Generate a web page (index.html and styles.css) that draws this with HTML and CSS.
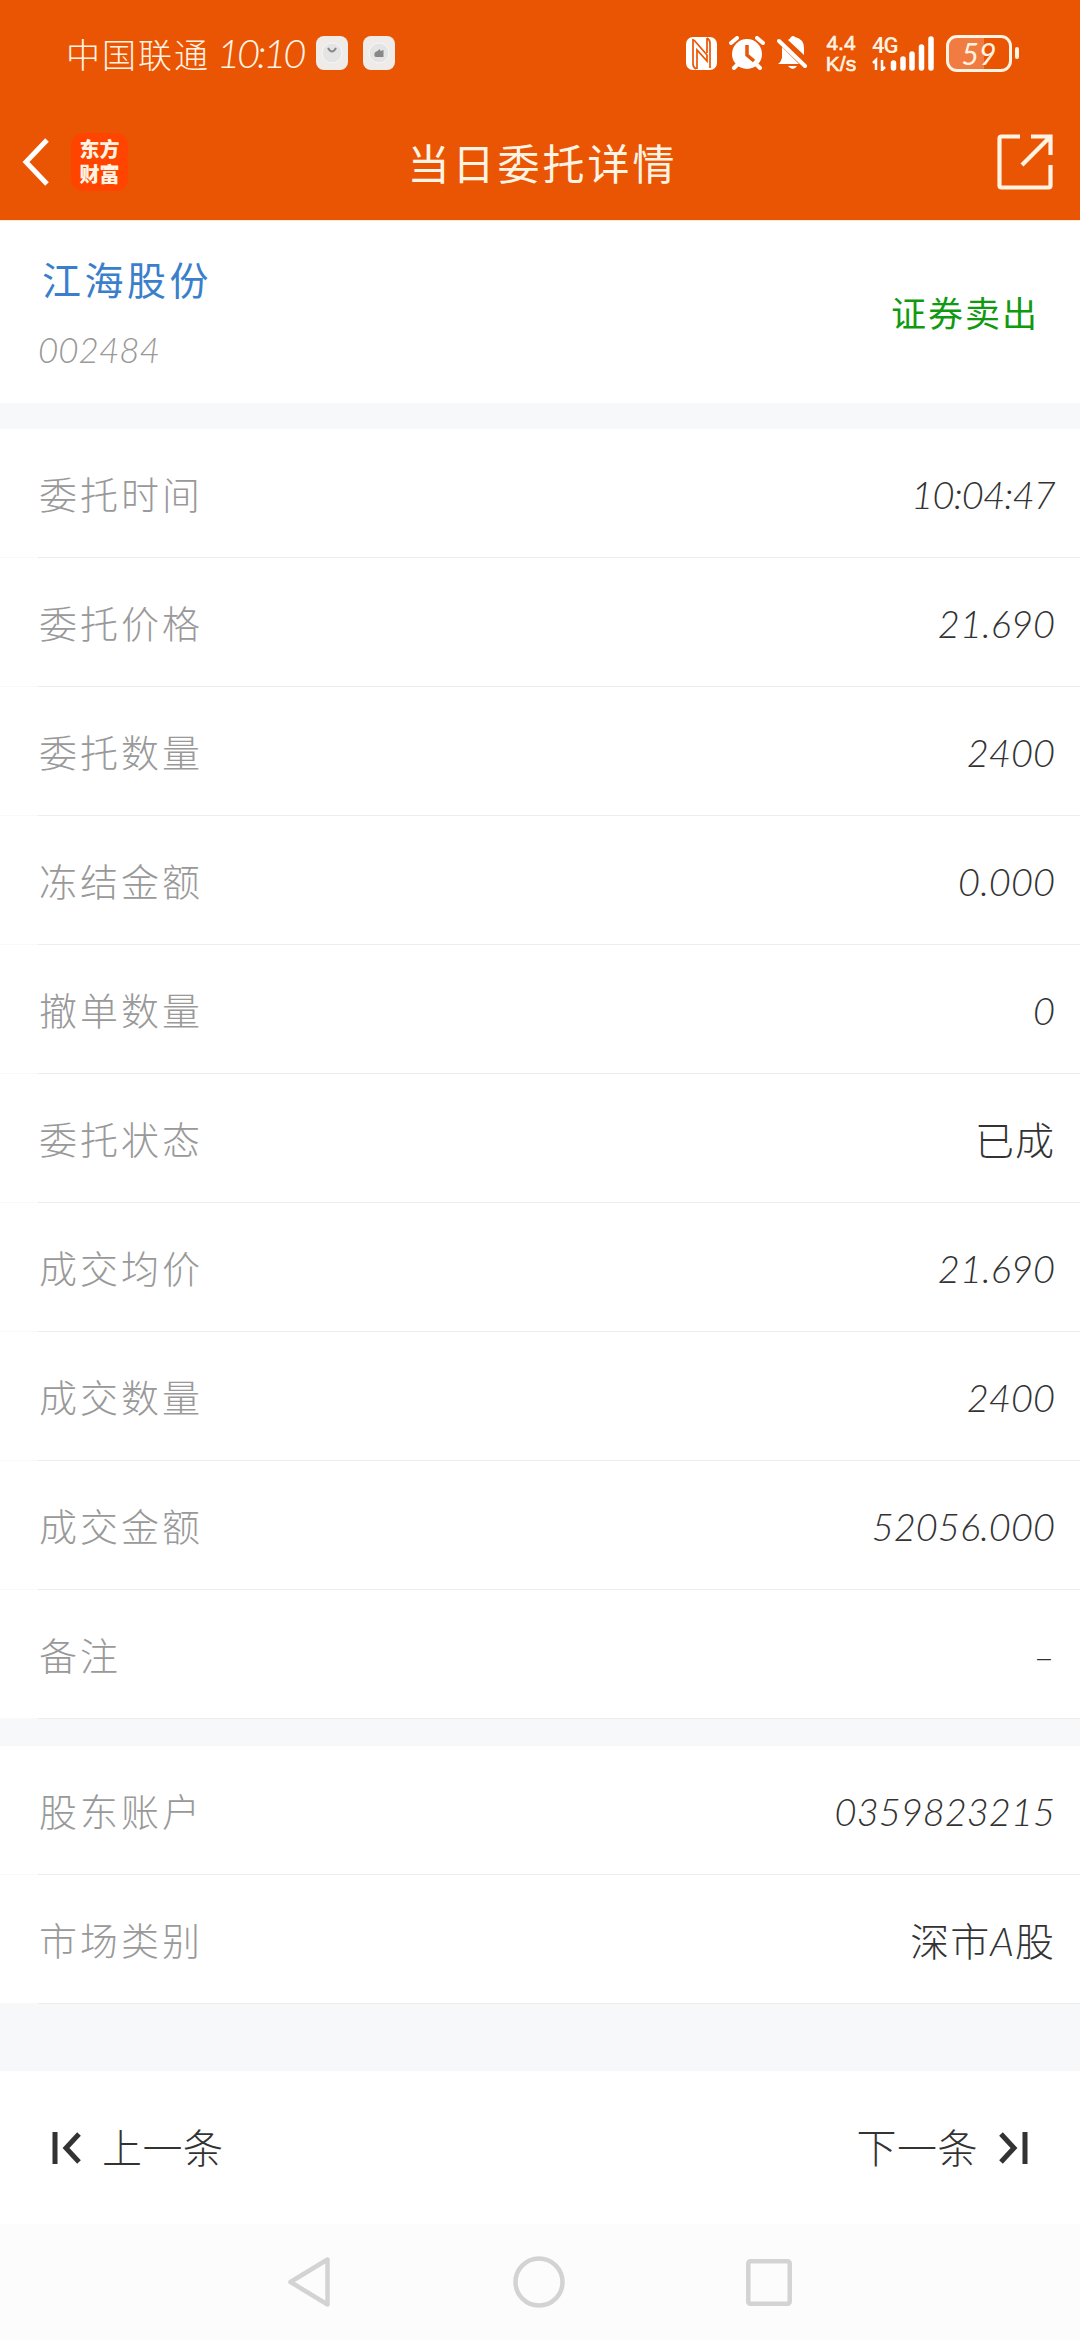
FILE: index.html
```html
<!DOCTYPE html>
<html lang="zh-CN">
<head>
    <meta charset="UTF-8">
    <meta name="viewport" content="width=device-width, initial-scale=1.0">
    <title>当日委托详情</title>
    <link rel="stylesheet" href="styles.css">
</head>
<body>
    <!-- 顶部 -->
    <header class="header">
        <div class="status-bar">
            <span class="carrier">中国联通</span>
            <span class="clock">10:10</span>
            <svg class="notice" width="32" height="34" viewBox="0 0 32 34">
                <rect width="32" height="34" rx="8" fill="#efebe9"/>
                <circle cx="16" cy="17" r="10" fill="#e4e4e4" stroke="#f6f6f6"/>
                <path d="M12 12q4 7 8 0" fill="none" stroke="#888" stroke-width="2"/>
            </svg>
            <svg class="notice" width="32" height="34" viewBox="0 0 32 34">
                <rect width="32" height="34" rx="8" fill="#efebe9"/>
                <circle cx="16" cy="17" r="10" fill="#e4e4e4" stroke="#f6f6f6"/>
                <path d="M11.500 20q-1-4 3-5l2-2 1 2 3-1v7h-8z" fill="#888"/>
            </svg>
            <div class="status-icons">
                <svg width="31" height="33" viewBox="0 0 31 33">
                    <rect width="31" height="33" rx="7" fill="#fff"/>
                    <path d="M7 2v25q0 3 3 5M24 31V6q0-3-3-5M11 32V13l10 11v-6L8 3M21 1v15" fill="none" stroke="#ea5504" stroke-width="1.700"/>
                </svg>
                <svg width="36" height="34" viewBox="0 0 36 34">
                    <circle cx="18" cy="18" r="15" fill="#fff"/>
                    <path d="M2 7l6-5M34 7l-6-5M9 28l-4 4M27 28l4 4" stroke="#fff" stroke-width="4" stroke-linecap="round"/>
                    <path d="M18 9v10l7 6" fill="none" stroke="#ea5504" stroke-width="3.500"/>
                </svg>
                <svg width="31" height="34" viewBox="0 0 31 34">
                    <path d="M5 22V11L22 28H1q3-2 4-6zM11 4q2-1 3-3q2-2 4 0q9 2 9 11v7zM11 30h9q-4 6-9 0z" fill="#fff"/>
                    <path d="M2 5l26 25" stroke="#fff" stroke-width="4" stroke-linecap="round"/>
                </svg>
                <div class="speed"><span>4.4</span><span>K/s</span></div>
                <div class="signal">
                    <span class="net">4G</span>
                    <svg width="62" height="35" viewBox="0 0 62 35">
                        <path d="M4 34V24L1 27M10 24v10l3-3" fill="none" stroke="#fff" stroke-width="2.500"/>
                        <path d="M21.500 27v5M31 23v9M40 18v14M49.500 11v21M59 3v29" stroke="#fff" stroke-width="5.500" stroke-linecap="round"/>
                    </svg>
                </div>
                <div class="battery"><span class="battery-box">59</span><i class="battery-cap"></i></div>
            </div>
        </div>
        <div class="title-bar">
            <svg class="back" width="28" height="48" viewBox="0 0 28 48">
                <path d="M25 2L4 24l21 22" fill="none" stroke="#fff" stroke-width="5"/>
            </svg>
            <div class="logo">东方<br>财富</div>
            <h1 class="title">当日委托详情</h1>
            <svg class="share" width="56" height="56" viewBox="0 0 56 56">
                <path d="M23 2.500H4.500q-2 0-2 2v47q0 2 2 2h47q2 0 2-2V31M34 2.500h19.500V21M52 4L25 31" fill="none" stroke="#fff4e4" stroke-width="4.200"/>
            </svg>
        </div>
    </header>

    <!-- 股票信息 -->
    <section class="stock">
        <div>
            <div class="stock-name">江海股份</div>
            <div class="stock-code">002484</div>
        </div>
        <div class="direction">证券卖出</div>
    </section>

    <!-- 委托明细 -->
    <section class="list">
        <div class="row"><span class="label">委托时间</span><span class="num time">10:04:47</span></div>
        <div class="row"><span class="label">委托价格</span><span class="num">21.690</span></div>
        <div class="row"><span class="label">委托数量</span><span class="num">2400</span></div>
        <div class="row"><span class="label">冻结金额</span><span class="num">0.000</span></div>
        <div class="row"><span class="label">撤单数量</span><span class="num">0</span></div>
        <div class="row"><span class="label">委托状态</span><span class="text">已成</span></div>
        <div class="row"><span class="label">成交均价</span><span class="num">21.690</span></div>
        <div class="row"><span class="label">成交数量</span><span class="num">2400</span></div>
        <div class="row"><span class="label">成交金额</span><span class="num">52056.000</span></div>
        <div class="row"><span class="label">备注</span><span class="num">–</span></div>
    </section>

    <!-- 账户信息 -->
    <section class="list">
        <div class="row"><span class="label">股东账户</span><span class="num">0359823215</span></div>
        <div class="row"><span class="label">市场类别</span><span class="text">深市<em>A</em>股</span></div>
    </section>

    <!-- 翻页 -->
    <footer class="pager">
        <div class="pager-item">
            <svg width="29" height="32" viewBox="0 0 29 32">
                <path d="M3 0v32M27 2L14 16l13 14" fill="none" stroke="#333" stroke-width="5"/>
            </svg>
            <span>上一条</span>
        </div>
        <div class="pager-item">
            <span>下一条</span>
            <svg width="29" height="32" viewBox="0 0 29 32">
                <path d="M26 0v32M2 2l13 14L2 30" fill="none" stroke="#333" stroke-width="5"/>
            </svg>
        </div>
    </footer>

    <!-- 系统导航栏 -->
    <nav class="nav-bar">
        <svg width="44" height="52" viewBox="0 0 44 52">
            <path d="M40.500 3.500v45L3.500 26z" fill="none" stroke="#d3d3d3" stroke-width="4.500" stroke-linejoin="round"/>
        </svg>
        <svg width="52" height="52" viewBox="0 0 52 52">
            <circle cx="26" cy="26" r="23.500" fill="none" stroke="#d3d3d3" stroke-width="4.500"/>
        </svg>
        <svg width="46" height="47" viewBox="0 0 46 47">
            <rect x="2.300" y="2.300" width="41.400" height="42.400" rx="2" fill="none" stroke="#d3d3d3" stroke-width="4.500"/>
        </svg>
    </nav>
</body>
</html>
```

FILE: styles.css
```css
* {
    box-sizing: border-box;
}

body {
    margin: 0;
    width: 1080px;
    height: 2340px;
    display: flex;
    flex-direction: column;
    overflow: hidden;
    background: #f7f8fa;
    color: #333;
    font-family: Lato, "Noto Sans CJK SC", sans-serif;
    font-weight: 300;
}

svg {
    display: block;
    flex: none;
}

/* 顶部 */
.header {
    height: 221px;
    background: #ea5504;
    border-bottom: 1px solid #ffecd0;
    color: #fff4e4;
}

.status-bar {
    display: flex;
    align-items: center;
    height: 106px;
    padding: 0 61px 0 66px;
}

.carrier {
    width: 151px;
    font-size: 34px;
    letter-spacing: 2px;
    white-space: nowrap;
}

.clock {
    width: 99px;
    font-size: 40px;
    font-style: italic;
    letter-spacing: -3.2px;
}

.notice {
    margin-right: 15px;
}

.status-icons {
    display: flex;
    align-items: center;
    margin-left: auto;
}

.status-icons > svg {
    margin-right: 12px;
}

.speed {
    display: flex;
    flex-direction: column;
    align-items: center;
    width: 34px;
    margin: 0 14px 0 4px;
    font: 500 21px/22px "Liberation Sans", sans-serif;
    -webkit-text-stroke: 0.6px #fff4e4;
}

.speed span {
    height: 21px;
    line-height: 21px;
    overflow: hidden;
}

.signal {
    position: relative;
    width: 62px;
    margin-right: 12px;
}

.net {
    position: absolute;
    top: -1px;
    left: 0;
    font: 500 22px/21px Roboto, sans-serif;
    letter-spacing: -1px;
}

.battery {
    display: flex;
    align-items: center;
    gap: 3px;
}

.battery-box {
    width: 66px;
    height: 37px;
    border: 3px solid #fff4e4;
    border-radius: 11px;
    background: linear-gradient(90deg, #f17c42 59%, transparent 59%);
    text-align: center;
    font-size: 30px;
    line-height: 30px;
    font-style: italic;
    font-weight: 400;
}

.battery-cap {
    width: 4px;
    height: 12px;
    border-radius: 2px;
    background: #fff4e4;
}

.title-bar {
    display: flex;
    align-items: center;
    height: 112px;
    padding: 0 27px 0 22px;
}

.logo {
    width: 57px;
    height: 58px;
    margin-left: 21px;
    padding-top: 4px;
    border-radius: 12px;
    background: #ff4400;
    text-align: center;
    font-size: 20px;
    line-height: 25px;
    font-weight: 900;
}

.title {
    flex: 1;
    margin: -2px 0 0 -40px;
    text-align: center;
    font-size: 42px;
    font-weight: 400;
    letter-spacing: 3px;
}

/* 股票信息 */
.stock {
    display: flex;
    justify-content: space-between;
    align-items: center;
    height: 183px;
    padding: 4px 41px 0 38px;
    background: #fff;
}

.stock-name {
    padding-left: 4px;
    color: #3b7fcc;
    font-size: 39px;
    font-weight: 400;
    line-height: 58px;
    letter-spacing: 3.5px;
}

.stock-code {
    margin-top: 11px;
    color: #999;
    font-size: 35px;
    line-height: 58px;
    font-style: italic;
}

.direction {
    padding-bottom: 5px;
    color: #119a11;
    font-size: 35px;
    font-weight: 400;
    letter-spacing: 2px;
}

/* 列表 */
.list {
    margin-top: 26px;
    background: #fff;
}

.list + .list {
    margin-top: 27px;
}

.row {
    display: flex;
    justify-content: space-between;
    align-items: center;
    height: 129px;
    padding: 0 25px 0 39px;
    background: linear-gradient(90deg, #f9f9f9 38px, #ededee 38px) bottom / 100% 1px no-repeat;
}

.label {
    margin-top: -2px;
    color: #999;
    font-size: 38px;
    letter-spacing: 3px;
}

.num {
    font-size: 38px;
    font-style: italic;
}

.time {
    letter-spacing: -0.8px;
}

.text {
    margin-top: -2px;
    font-size: 39px;
    letter-spacing: 1px;
}

/* 翻页 */
.pager {
    display: flex;
    justify-content: space-between;
    align-items: center;
    height: 153px;
    margin-top: 67px;
    padding: 0 52px;
    background: #fff;
}

.pager-item {
    display: flex;
    align-items: center;
    gap: 21px;
    font-size: 40px;
}

.pager-item span {
    margin-top: -3px;
    letter-spacing: 0.5px;
}

/* 系统导航栏 */
.nav-bar {
    display: flex;
    justify-content: space-between;
    align-items: center;
    height: 116px;
    padding: 0 288px 0 287px;
    background: #fcfcfc;
}
```
